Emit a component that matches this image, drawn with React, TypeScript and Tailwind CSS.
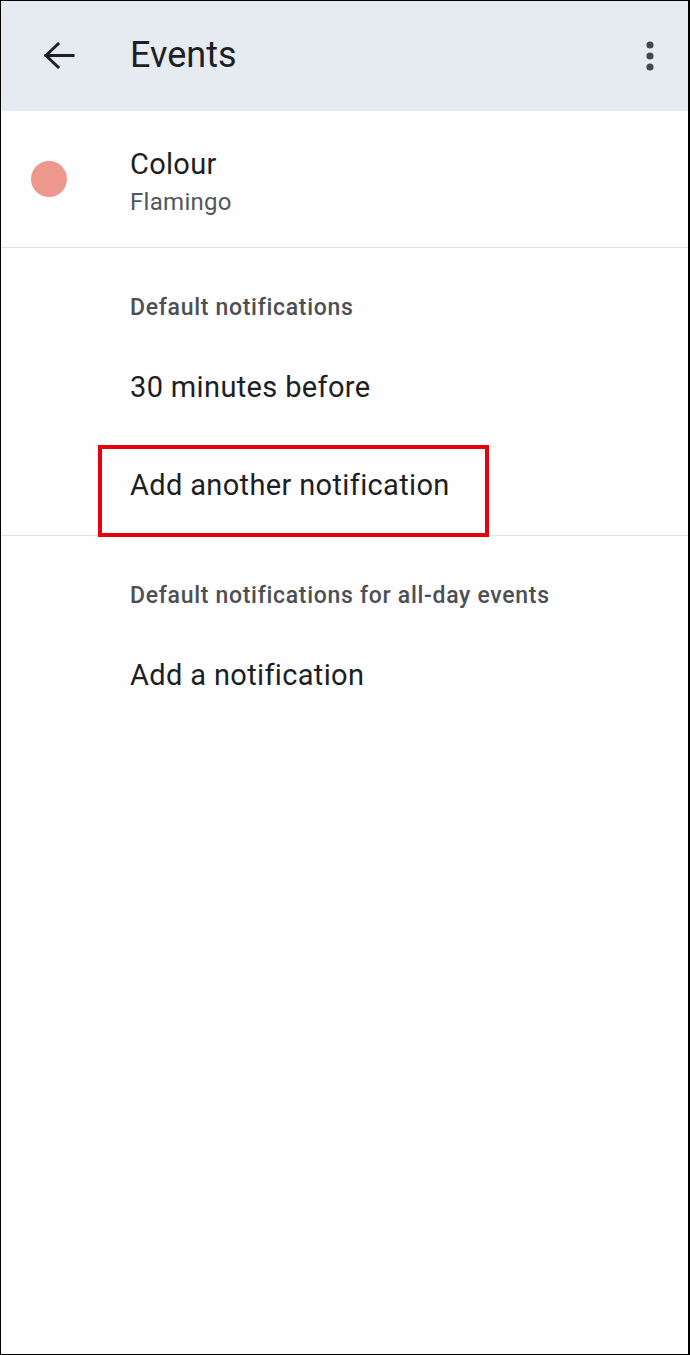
import React from 'react';

const font = { fontFamily: 'Roboto, "Noto Sans", sans-serif' };

function Section({ label, items }: { label: string; items: React.ReactNode[] }) {
    return (
        <div>
            <div className="pl-[129px] pt-[46px] pb-[16px] text-[23px] leading-[28px] tracking-[0.7px] font-medium text-[#4d5053]">
                {label}
            </div>
            {items}
        </div>
    );
}

export default function App() {
    return (
        <div
            className="w-[690px] h-[1355px] bg-[#fefdff] border border-black border-r-2 flex flex-col overflow-hidden"
            style={font}
        >
            <header className="h-[110px] shrink-0 bg-[#e6ebf2] flex items-center">
                <div className="w-[129px] pl-[42px] flex items-center">
                    <svg width="34" height="30" viewBox="0 0 34 30" fill="none" stroke="#1d1f22" strokeWidth="3" strokeLinecap="square">
                        <path d="M3 14.5H30" />
                        <path d="M15 3L3 14.5L15 26" strokeLinejoin="miter" />
                    </svg>
                </div>
                <h1 className="flex-1 text-[36px] leading-none text-[#1d1f22] -mt-[2px]">Events</h1>
                <div className="w-[80px] flex justify-center pl-[4px]">
                    <svg width="8" height="30" viewBox="0 0 8 30" fill="#46484b">
                        <circle cx="4" cy="4" r="3.6" />
                        <circle cx="4" cy="15" r="3.6" />
                        <circle cx="4" cy="26" r="3.6" />
                    </svg>
                </div>
            </header>

            <div className="h-[136px] shrink-0 flex items-center pl-[30px]">
                <div className="w-9 h-9 rounded-full bg-[#ee978c]" />
                <div className="ml-[63px] mt-[6px]">
                    <div className="text-[29px] leading-[40px] tracking-[0.3px] text-[#1d1f22]">Colour</div>
                    <div className="text-[24px] leading-[36px] tracking-[0.3px] text-[#54575a]">Flamingo</div>
                </div>
            </div>

            <div className="h-px shrink-0 bg-[#e1e2e5]" />

            <Section
                label="Default notifications"
                items={[
                    <div key="30" className="h-[99px] flex items-center pl-[129px] text-[29px] tracking-[0.35px] text-[#1d1f22]">
                        30 minutes before
                    </div>,
                    <div key="add" className="relative h-[98px] flex items-center pl-[129px] text-[29px] tracking-[0.35px] text-[#1d1f22]">
                        Add another notification
                        <div className="absolute left-[97px] top-[8px] w-[391px] h-[92px] border-4 border-[#e8000e]" />
                    </div>,
                ]}
            />

            <div className="h-px shrink-0 bg-[#e1e2e5]" />

            <Section
                label="Default notifications for all-day events"
                items={[
                    <div key="add" className="h-[100px] flex items-center pl-[129px] text-[29px] tracking-[0.35px] text-[#1d1f22]">
                        Add a notification
                    </div>,
                ]}
            />
        </div>
    );
}
